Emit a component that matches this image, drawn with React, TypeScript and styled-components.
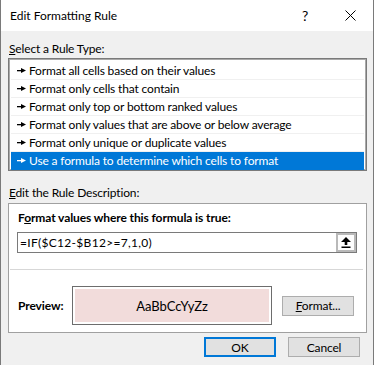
import React from "react";
import styled, { createGlobalStyle } from "styled-components";

const GlobalStyle = createGlobalStyle`
  html, body {
    margin: 0;
    background: #ffffff;
  }
  body {
    font-family: Lato, "Noto Sans", sans-serif;
    font-size: 12px;
    letter-spacing: -0.15px;
    color: #000000;
  }
`;

const Dialog = styled.div`
  width: 374px;
  height: 365px;
  box-sizing: border-box;
  border-left: 1px solid #7a7a7a;
  border-right: 1px solid #7a7a7a;
  background: #f0f0f0;
  display: flex;
  flex-direction: column;
`;

const TitleBar = styled.div`
  height: 31px;
  background: #ffffff;
  display: flex;
  align-items: center;
  padding-left: 9px;
`;

const Title = styled.div`
  flex: 1;
  letter-spacing: 0;
`;

const TitleButton = styled.div<{ $w: number }>`
  width: ${(p) => p.$w}px;
  height: 31px;
  display: flex;
  align-items: center;
  justify-content: center;
  font-size: 14px;
`;

const Body = styled.div`
  flex: 1;
  display: flex;
  flex-direction: column;
  padding: 0 6px 0 7px;
`;

const Label = styled.div<{ $top: number }>`
  margin-top: ${(p) => p.$top}px;
  padding-left: 1px;
  line-height: 16px;
  height: 16px;
`;

const ListBox = styled.div`
  margin-top: 1px;
  height: 113px;
  box-sizing: border-box;
  overflow: hidden;
  background: #ffffff;
  border: 1px solid #7a7a7a;
  box-shadow: inset 0 0 0 1px #a9a9a9;
  padding: 3px 2px 0 2px;
  display: flex;
  flex-direction: column;
`;

const Row = styled.div<{ $selected?: boolean }>`
  flex: none;
  height: 17px;
  border-bottom: 1px solid ${(p) => (p.$selected ? "#0078d7" : "#f0f0f0")};
  background: ${(p) => (p.$selected ? "#0078d7" : "transparent")};
  color: ${(p) => (p.$selected ? "#ffffff" : "#000000")};
  display: flex;
  align-items: center;
  gap: 3px;
  padding-left: 6px;
  line-height: 17px;
  white-space: nowrap;
`;

const DescBox = styled.div`
  margin-top: 2px;
  background: #ffffff;
  border: 1px solid #a0a0a0;
  padding: 6px 0 0 9px;
  height: 130px;
  box-sizing: border-box;
  display: flex;
  flex-direction: column;
`;

const Heading = styled.div`
  font-weight: bold;
  letter-spacing: -0.1px;
  line-height: 16px;
  height: 16px;
`;

const FormulaInput = styled.div`
  margin: 6px 0 0 -1px;
  width: 340px;
  height: 21px;
  box-sizing: border-box;
  border: 1px solid #7a7a7a;
  display: flex;
  align-items: center;
  padding-left: 2px;
`;

const FormulaText = styled.div`
  flex: 1;
  letter-spacing: 0.3px;
`;

const CollapseButton = styled.div`
  width: 20px;
  height: 19px;
  box-sizing: border-box;
  border: 2px solid #b9b9b9;
  background: #fdfdfd;
  display: flex;
  align-items: center;
  justify-content: center;
`;

const Separator = styled.div`
  margin: 16px 3px 0 -8px;
  border-top: 1px solid #d7d7d7;
`;

const PreviewRow = styled.div`
  margin-top: 16px;
  display: flex;
  align-items: center;
`;

const PreviewLabel = styled.div`
  width: 54px;
  font-weight: bold;
  letter-spacing: -0.1px;
`;

const PreviewBox = styled.div`
  width: 200px;
  height: 39px;
  box-sizing: border-box;
  border: 1px solid #6d6d6d;
  padding: 2px;
  background: #ffffff;
`;

const PreviewFill = styled.div`
  height: 100%;
  background: #f2dcdb;
  display: flex;
  align-items: center;
  justify-content: center;
  font-size: 13px;
  letter-spacing: 0;
`;

const Button = styled.div<{ $default?: boolean }>`
  width: 72px;
  height: 20px;
  box-sizing: border-box;
  border: ${(p) => (p.$default ? "2px solid #0078d7" : "1px solid #adadad")};
  background: #e1e1e1;
  display: flex;
  align-items: center;
  justify-content: center;
`;

const FormatButton = styled(Button)`
  margin-left: 10px;
`;

const Footer = styled.div`
  margin-top: 4px;
  display: flex;
  justify-content: flex-end;
  gap: 12px;
  padding-right: 7px;
`;

const Key = styled.span`
  text-decoration: underline;
`;

const Arrow = () => (
  <svg width="9" height="7" viewBox="0 0 9 7">
    <rect x="0" y="3" width="5" height="1.3" fill="currentColor" />
    <polygon points="4,1 9,3.6 4,6" fill="currentColor" />
  </svg>
);

const rules = [
  "Format all cells based on their values",
  "Format only cells that contain",
  "Format only top or bottom ranked values",
  "Format only values that are above or below average",
  "Format only unique or duplicate values",
  "Use a formula to determine which cells to format",
];

export default function App() {
  return (
    <>
      <GlobalStyle />
      <Dialog>
        <TitleBar>
          <Title>Edit Formatting Rule</Title>
          <TitleButton $w={44}>?</TitleButton>
          <TitleButton $w={46}>
            <svg width="11" height="11" viewBox="0 0 11 11">
              <path d="M0.5 0.5 L10.5 10.5 M10.5 0.5 L0.5 10.5" stroke="#000" strokeWidth="1" />
            </svg>
          </TitleButton>
        </TitleBar>
        <Body>
          <Label $top={10}>
            <Key>S</Key>elect a Rule Type:
          </Label>
          <ListBox>
            {rules.map((r, i) => (
              <Row key={r} $selected={i === rules.length - 1}>
                <Arrow />
                {r}
              </Row>
            ))}
          </ListBox>
          <Label $top={14}>
            <Key>E</Key>dit the Rule Description:
          </Label>
          <DescBox>
            <Heading>
              F<Key>o</Key>rmat values where this formula is true:
            </Heading>
            <FormulaInput>
              <FormulaText>=IF($C12-$B12&gt;=7,1,0)</FormulaText>
              <CollapseButton>
                <svg width="10" height="11" viewBox="0 0 10 11">
                  <polygon points="5,0 10,5 6.3,5 6.3,8 3.7,8 3.7,5 0,5" fill="#000" />
                  <rect x="0.5" y="9.5" width="9" height="1.5" fill="#000" />
                </svg>
              </CollapseButton>
            </FormulaInput>
            <Separator />
            <PreviewRow>
              <PreviewLabel>Preview:</PreviewLabel>
              <PreviewBox>
                <PreviewFill>AaBbCcYyZz</PreviewFill>
              </PreviewBox>
              <FormatButton>
                <span>
                  <Key>F</Key>ormat...
                </span>
              </FormatButton>
            </PreviewRow>
          </DescBox>
          <Footer>
            <Button $default>OK</Button>
            <Button>Cancel</Button>
          </Footer>
        </Body>
      </Dialog>
    </>
  );
}
